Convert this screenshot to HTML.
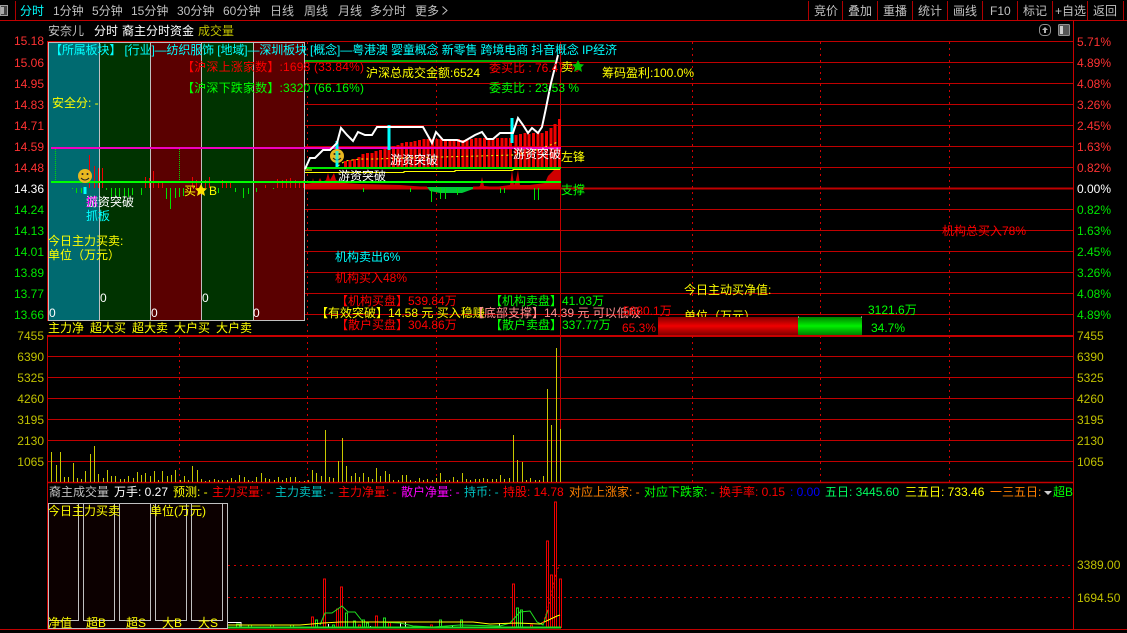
<!DOCTYPE html>
<html><head><meta charset="utf-8"><style>
html,body{margin:0;padding:0;background:#000;width:1127px;height:633px;overflow:hidden}
svg{display:block;position:absolute;left:0;top:0}
text{font-family:"Liberation Sans","WenQuanYi Zen Hei","Noto Sans CJK SC",sans-serif;font-size:12px;white-space:pre}
.g{fill:#c0c0c0}.w{fill:#fff}.c{fill:#00ffff}.t{fill:#00c0c0}.r{fill:#ff0000}.lr{fill:#ff3232}.n{fill:#00e600}.gg{fill:#00ff00}
.y{fill:#ffff00}.dy{fill:#c0c000}.m{fill:#ff00ff}.o{fill:#ff8000}.p{fill:#ff9090}.b{fill:#0000ff}.e{text-anchor:end}
</style></head><body>
<svg width="1127" height="633" viewBox="0 0 1127 633" xmlns="http://www.w3.org/2000/svg">
<defs>
<linearGradient id="gr" x1="0" y1="0" x2="0" y2="1"><stop offset="0" stop-color="#800000"/><stop offset=".5" stop-color="#f00000"/><stop offset="1" stop-color="#800000"/></linearGradient>
<linearGradient id="gg" x1="0" y1="0" x2="0" y2="1"><stop offset="0" stop-color="#008000"/><stop offset=".5" stop-color="#00f000"/><stop offset="1" stop-color="#008000"/></linearGradient>
</defs>
<rect width="1127" height="633" fill="#000"/>

<!-- top bar -->
<rect x="0.5" y="5.5" width="7" height="10" fill="#444" stroke="#a0a0a0"/><rect x="1" y="7" width="3" height="7" fill="#aaa"/>
<path d="M15.5 1V20M808.5 1V20M842.5 1V20M877.5 1V20M912.5 1V20M947.5 1V20M982.5 1V20M1017.5 1V20M1052.5 1V20M1087.5 1V20M1123.5 1V20" stroke="#b00000"/>
<path d="M0 20.5H1127" stroke="#c00000"/>
<text x="20" y="15" class="c">分时</text>
<text x="53" y="15" class="g">1分钟</text><text x="92" y="15" class="g">5分钟</text><text x="131" y="15" class="g">15分钟</text><text x="177" y="15" class="g">30分钟</text><text x="223" y="15" class="g">60分钟</text>
<text x="270" y="15" class="g">日线</text><text x="304" y="15" class="g">周线</text><text x="338" y="15" class="g">月线</text><text x="370" y="15" class="g">多分时</text><text x="415" y="15" class="g">更多</text>
<path d="M442.5 6.5L447 10.5L442.5 14.5" fill="none" stroke="#c0c0c0"/>
<text x="814" y="15" class="g">竞价</text><text x="848" y="15" class="g">叠加</text><text x="883" y="15" class="g">重播</text><text x="918" y="15" class="g">统计</text><text x="953" y="15" class="g">画线</text><text x="990" y="15" class="g">F10</text><text x="1023" y="15" class="g">标记</text><text x="1055" y="15" class="g">+自选</text><text x="1093" y="15" class="g">返回</text>

<!-- title -->
<text x="48" y="35" class="g">安奈儿</text><text x="94" y="35" class="w">分时</text><text x="122" y="35" class="w">裔主分时资金</text><text x="198" y="35" class="dy">成交量</text>

<!-- top-right icons -->
<rect x="1039.5" y="24.5" width="11" height="11" rx="4" fill="none" stroke="#909090"/><path d="M1045 27L1048 30H1046V33H1044V30H1042Z" fill="#b0b0b0"/>
<rect x="1058.5" y="24.5" width="11" height="11" rx="1" fill="#555" stroke="#909090"/><rect x="1060" y="26" width="3" height="8" fill="#ccc"/>

<!-- grid -->
<path d="M47 41.5H1073M47 62.5H1073M47 83.5H1073M47 104.5H1073M47 125.5H1073M47 146.5H1073M47 167.5H1073M47 209.5H1073M47 230.5H1073M47 251.5H1073M47 272.5H1073M47 293.5H1073M47 314.5H1073M47 356.5H1073M47 377.5H1073M47 398.5H1073M47 419.5H1073M47 440.5H1073M47 461.5H1073" stroke="#c00000" fill="none"/>
<path d="M47 188.5H1073" stroke="#c00000" stroke-width="2"/>
<path d="M47 336H1073" stroke="#c80000" stroke-width="2"/>
<path d="M47 482.5H1073" stroke="#c80000" stroke-width="1.5"/>
<path d="M0 629.5H1127" stroke="#c00000"/>
<path d="M47.5 42V630M1073.5 20V630" stroke="#c80000"/>
<path d="M560.5 42V482" stroke="#c00000"/>
<path d="M179.5 42V482M307.5 42V482M436.5 42V482M692.5 42V482M820.5 42V482M949.5 42V482" stroke="#d00000" stroke-dasharray="2 4"/>
<path d="M228 565.5H1073M228 597.5H1073" stroke="#d00000" stroke-dasharray="2 4"/>

<!-- y labels left -->
<g class="lr"><text x="44" y="45" class="e lr">15.18</text><text x="44" y="67" class="e lr">15.06</text><text x="44" y="88" class="e lr">14.95</text><text x="44" y="109" class="e lr">14.83</text><text x="44" y="130" class="e lr">14.71</text><text x="44" y="151" class="e lr">14.59</text><text x="44" y="172" class="e lr">14.48</text></g>
<text x="44" y="193" class="e w">14.36</text>
<text x="44" y="214" class="e n">14.24</text><text x="44" y="235" class="e n">14.13</text><text x="44" y="256" class="e n">14.01</text><text x="44" y="277" class="e n">13.89</text><text x="44" y="298" class="e n">13.77</text><text x="44" y="319" class="e n">13.66</text>
<text x="44" y="340" class="e dy">7455</text><text x="44" y="361" class="e dy">6390</text><text x="44" y="382" class="e dy">5325</text><text x="44" y="403" class="e dy">4260</text><text x="44" y="424" class="e dy">3195</text><text x="44" y="445" class="e dy">2130</text><text x="44" y="466" class="e dy">1065</text>

<!-- y labels right -->
<text x="1077" y="46" class="lr">5.71%</text><text x="1077" y="67" class="lr">4.89%</text><text x="1077" y="88" class="lr">4.08%</text><text x="1077" y="109" class="lr">3.26%</text><text x="1077" y="130" class="lr">2.45%</text><text x="1077" y="151" class="lr">1.63%</text><text x="1077" y="172" class="lr">0.82%</text>
<text x="1077" y="193" class="w">0.00%</text>
<text x="1077" y="214" class="n">0.82%</text><text x="1077" y="235" class="n">1.63%</text><text x="1077" y="256" class="n">2.45%</text><text x="1077" y="277" class="n">3.26%</text><text x="1077" y="298" class="n">4.08%</text><text x="1077" y="319" class="n">4.89%</text>
<text x="1077" y="340" class="dy">7455</text><text x="1077" y="361" class="dy">6390</text><text x="1077" y="382" class="dy">5325</text><text x="1077" y="403" class="dy">4260</text><text x="1077" y="424" class="dy">3195</text><text x="1077" y="445" class="dy">2130</text><text x="1077" y="466" class="dy">1065</text>
<text x="1077" y="569" class="dy">3389.00</text><text x="1077" y="602" class="dy">1694.50</text>

<!-- left panel -->
<rect x="48" y="42" width="51" height="278" fill="#006a70"/>
<rect x="99" y="42" width="51" height="278" fill="#003300"/>
<rect x="150" y="42" width="51" height="278" fill="#5a0000"/>
<rect x="201" y="42" width="52" height="278" fill="#003300"/>
<rect x="253" y="42" width="51" height="278" fill="#5a0000"/>
<path d="M48.5 42.5H304.5V320.5H48.5ZM99.5 42V320M150.5 42V320M201.5 42V320M253.5 42V320" fill="none" stroke="#c0c0c0"/>
<text x="49" y="317" class="w">0</text><text x="100" y="302" class="w">0</text><text x="151" y="317" class="w">0</text><text x="202" y="302" class="w">0</text><text x="253" y="317" class="w">0</text>

<!-- top green line -->
<path d="M305 61H555" stroke="#00e000" stroke-width="1.5"/>

<!-- sticks left -->
<path d="M89.5 155V188M94.5 166V188M98.5 168V188M102.5 168V188M145.5 177V188M149.5 178V188M153.5 171V188M158.5 182V188M162.5 182V188M192.5 177V188M196.5 180V188M205.5 180V188M209.5 177V188M222.5 180V188M226.5 183V188M230.5 183V188M265.5 185V188M277.5 179V188M282.5 180V188M286.5 179V188M290.5 178V188M295.5 180V188M299.5 182V188M303.5 180V188" stroke="#f00000"/>
<path d="M72.5 188V189M76.5 188V193M81.5 188V193M106.5 188V190M111.5 188V197M115.5 188V197M119.5 188V197M124.5 188V197M128.5 188V197M132.5 188V195M141.5 188V195M166.5 188V199M170.5 188V209M175.5 188V198M179.5 188V197M183.5 188V196M218.5 188V193M235.5 188V192M243.5 188V198M248.5 188V194M256.5 188V192M273.5 188V189" stroke="#00e000"/>
<path d="M55.5 149V180M179.5 149V180" stroke="#00e000" stroke-dasharray="1 1"/>

<!-- main red bars -->
<path d="M345.5 168V161M350 168V160M354.5 168V159M359 168V157M363 168V154M367.5 168V153M372 168V153M376 168V151M380.5 168V150M385 168V149M389 168V147M393.5 168V146M398 168V145M402 168V143M406.5 168V142M411 168V142M415 168V141M419.5 168V140M424 168V139M428 168V139M432.5 168V139M437 168V139M441 168V139M445.5 168V140M450 168V140M454 168V140M458.5 168V139M463 168V140M467 168V139M471.5 168V139M476 168V138M480 168V138M484.5 168V138M489 168V139M493 168V139M497.5 168V138M502 168V138M506 168V138M510.5 168V138M516 168V135M520.5 168V134M525 168V133M529 168V134M533.5 168V133M538 168V133M542 168V133M546.5 168V131M551 168V128M555 168V124M559.5 168V119" stroke="#f00000" stroke-width="3"/>
<path d="M338 166L345 161L360 159L376 159L400 158L440 157L480 156L513 155L530 152L545 147L558 142" fill="none" stroke="#ffff00" stroke-dasharray="2 3"/>

<!-- bottom red band -->
<path d="M305 189V184L312 183L313 178L314 183L318 182L320 178L322 182L326 180L328 173L330 180L334 173L336 180L344 183L360 184L400 185L427 187V189ZM473 189L480 186L482 177L484 186L495 187L510 185L512 170L514 185L516 180L518 170L520 185L530 185L545 183L548 176L552 172L556 168L561 168V189Z" fill="#d00000"/>
<path d="M305 188H427M473 188H561" stroke="#c80000" stroke-width="3"/>
<path d="M427 187H473V189L462 193H450L440 193L430 191Z" fill="#00c838"/>
<path d="M363.5 188V192M410.5 188V192M431.5 188V202M440.5 188V199M445.5 188V199M457.5 188V195M500.5 188V193M504.5 188V193M534.5 188V200M538.5 188V200" stroke="#00e000"/>

<!-- yellow lines -->
<path d="M305 172.5H404V171.5H455V170.5H513V169.5H560" fill="none" stroke="#ffff00"/>
<path d="M305 170H312" stroke="#ffff00"/>

<!-- green & magenta horizontal -->
<path d="M51 148H561" stroke="#f000c0" stroke-width="2"/>
<path d="M305 168H561" stroke="#00e800" stroke-width="2"/>
<path d="M51 182H561" stroke="#00ff00" stroke-width="2"/>

<!-- cyan bars -->
<path d="M337 141V167M389 125V150M512 118V143M85 187V194" stroke="#00ffff" stroke-width="3"/>

<!-- price line -->
<polyline points="305,169 310,158 315,158 323,150 330,150 337,143 341,128 347,135 353,141 358,132 365,135 372,135 377,127 388,127 423,127 432,143 436,132 443,140 457,140 463,142 475,135 482,132 487,139 493,139 500,133 513,133 518,118 523,125 528,133 532,128 538,133 542,127 546,108 551,83 558,55" fill="none" stroke="#fff" stroke-width="2"/>

<!-- emoji -->
<circle cx="85" cy="176" r="7" fill="#e8b820"/><circle cx="82.5" cy="174" r="1" fill="#222"/><circle cx="87.5" cy="174" r="1" fill="#222"/><path d="M81 178Q85 182 89 178" fill="none" stroke="#222"/>
<circle cx="337" cy="156" r="7" fill="#e8b820"/><circle cx="334.5" cy="154" r="1" fill="#222"/><circle cx="339.5" cy="154" r="1" fill="#222"/><path d="M333 158Q337 162 341 158" fill="none" stroke="#222"/>
<path d="M337 151V163" stroke="#00ffff" stroke-width="3" opacity=".7"/>

<!-- overlays main chart -->
<text x="50" y="54" class="c" textLength="567" lengthAdjust="spacing">【所属板块】 [行业]—纺织服饰 [地域]—深圳板块 [概念]—粤港澳 婴童概念 新零售 跨境电商 抖音概念 IP经济</text>
<text x="182" y="71" class="r" textLength="182">【沪深上涨家数】:1698 (33.84%)</text>
<text x="182" y="92" class="gg" textLength="182">【沪深下跌家数】:3320 (66.16%)</text>
<text x="366" y="77" class="y">沪深总成交金额:6524</text>
<text x="489" y="72" class="r">委买比 : 76.47 %</text>
<text x="489" y="92" class="gg">委卖比 : 23.53 %</text>
<text x="561" y="71" class="y">卖</text>
<polygon points="578,60 580,64 584,64.5 581,67.5 582,72 578,69.5 574,72 575,67.5 572,64.5 576,64" fill="#00c000"/>
<text x="602" y="77" class="y">筹码盈利:100.0%</text>
<text x="52" y="107" class="y">安全分: -</text>

<text x="86" y="206" class="w">游资突破</text><text x="86" y="206" class="m">抓</text>
<text x="86" y="220" class="c">抓板</text>
<text x="48" y="245" class="y">今日主力买卖:</text>
<text x="48" y="259" class="y">单位（万元）</text>
<text x="184" y="195" class="y">买</text>
<polygon points="201,184 203,188 207,188.5 204,191.5 205,196 201,193.5 197,196 198,191.5 195,188.5 199,188" fill="#ffe000"/>
<text x="209" y="195" class="y">B</text>
<text x="390" y="164" class="w">游资突破</text>
<text x="338" y="180" class="w">游资突破</text>
<text x="513" y="158" class="w">游资突破</text>
<text x="561" y="161" class="y">左锋</text>
<text x="561" y="194" class="gg">支撑</text>

<text x="335" y="261" class="c">机构卖出6%</text>
<text x="335" y="282" class="r">机构买入48%</text>
<text x="336" y="305" class="r">【机构买盘】539.84万</text>
<text x="490" y="305" class="gg">【机构卖盘】41.03万</text>
<text x="316" y="317" class="y">【有效突破】14.58 元 买入稳赚</text>
<text x="472" y="317" class="p">【底部支撑】14.39 元 可以低吸</text>
<text x="336" y="329" class="r">【散户买盘】304.86万</text>
<text x="490" y="329" class="gg">【散户卖盘】337.77万</text>
<text x="942" y="235" class="r">机构总买入78%</text>
<text x="684" y="294" class="y">今日主动买净值:</text>
<text x="684" y="320" class="y">单位（万元）</text>
<text x="623" y="315" class="r">5880.1万</text>
<text x="868" y="314" class="gg">3121.6万</text>
<text x="622" y="332" class="r">65.3%</text>
<text x="871" y="332" class="gg">34.7%</text>
<rect x="658" y="317" width="140" height="18" fill="url(#gr)"/>
<rect x="798" y="317" width="64" height="18" fill="url(#gg)"/>
<path d="M798 317h1M861 317h1" stroke="#ddd"/>

<rect x="47" y="321" width="258" height="14" fill="#000"/>
<text x="48" y="332" class="y">主力净</text><text x="90" y="332" class="y">超大买</text><text x="132" y="332" class="y">超大卖</text><text x="174" y="332" class="y">大户买</text><text x="216" y="332" class="y">大户卖</text>

<!-- volume bars -->
<path stroke="#c8c800" fill="none" d="M51.5 482V452M56.5 482V465M60.5 482V452M64.5 482V477M68.5 482V477M73.5 482V463M77.5 482V478M81.5 482V479M85.5 482V471M90.5 482V454M94.5 482V446M98.5 482V474M103.5 482V478M107.5 482V470M111.5 482V476M115.5 482V476M120.5 482V479M124.5 482V479M128.5 482V476M133.5 482V478M137.5 482V472M141.5 482V475M145.5 482V473M150.5 482V476M154.5 482V471M158.5 482V480M162.5 482V471M167.5 482V476M171.5 482V475M175.5 482V470M180.5 482V480M184.5 482V476M188.5 482V480M192.5 482V466M197.5 482V470M201.5 482V479M205.5 482V481M209.5 482V480M214.5 482V479M218.5 482V480M222.5 482V480M227.5 482V480M231.5 482V478M235.5 482V480M239.5 482V475M244.5 482V477M248.5 482V480M252.5 482V481M256.5 482V477M261.5 482V473M265.5 482V478M269.5 482V479M274.5 482V480M278.5 482V477M282.5 482V480M286.5 482V478M290.5 482V477M295.5 482V477M299.5 482V481M304.5 482V481M308.5 482V480M312.5 482V470M316.5 482V473M321.5 482V476M325.5 482V430M329.5 482V477M333.5 482V478M338.5 482V461M342.5 482V438M346.5 482V466M351.5 482V476M355.5 482V473M359.5 482V477M363.5 482V473M368.5 482V477M372.5 482V479M376.5 482V468M380.5 482V476M385.5 482V471M389.5 482V474M393.5 482V480M398.5 482V480M402.5 482V475M406.5 482V475M410.5 482V480M415.5 482V481M419.5 482V478M423.5 482V480M427.5 482V479M432.5 482V480M436.5 482V478M440.5 482V473M445.5 482V480M449.5 482V480M453.5 482V477M457.5 482V480M462.5 482V473M466.5 482V479M470.5 482V480M475.5 482V479M479.5 482V479M483.5 482V478M487.5 482V479M492.5 482V479M496.5 482V479M500.5 482V475M504.5 482V479M509.5 482V478M513.5 482V435M517.5 482V460M522.5 482V462M526.5 482V480M530.5 482V478M535.5 482V480M539.5 482V480M543.5 482V476M547.5 482V389M551.5 482V425M556.5 482V348M560.5 482V429"/>

<!-- bottom indicators -->
<text x="49" y="496" class="g">裔主成交量</text>
<text x="114" y="496" class="w">万手: 0.27</text>
<text x="173" y="496" class="y">预测: -</text>
<text x="212" y="496" class="r">主力买量: -</text>
<text x="275" y="496" class="t">主力卖量: -</text>
<text x="338" y="496" class="r">主力净量: -</text>
<text x="401" y="496" class="m">散户净量: -</text>
<text x="464" y="496" class="t">持币: -</text>
<text x="503" y="496" class="r">持股: 14.78</text>
<text x="569" y="496" class="o">对应上涨家: -</text>
<text x="644" y="496" class="gg">对应下跌家: -</text>
<text x="719" y="496" class="r">换手率: 0.15</text>
<text x="790" y="496" class="b">: 0.00</text>
<text x="825" y="496" fill="#00ff60">五日: 3445.60</text>
<text x="905" y="496" class="y">三五日: 733.46</text>
<text x="990" y="496" class="o">一三五日:</text>
<text x="1053" y="496" class="gg">超B</text>
<path d="M1044 491H1052L1048 495Z" fill="#ccc"/>

<!-- bottom left box -->
<rect x="48.5" y="503.5" width="179" height="125" fill="#0c0000" stroke="#c0c0c0"/>
<path d="M48.5 503.5H78.5V620.5H48.5ZM83.5 503.5H114.5V620.5H83.5ZM119.5 503.5H150.5V620.5H119.5ZM155.5 503.5H186.5V620.5H155.5ZM191.5 503.5H222.5V620.5H191.5Z" fill="#0c0000" stroke="#c0c0c0"/>
<text x="48" y="515" class="y">今日主力买卖</text><text x="150" y="515" class="y">单位(万元)</text>
<text x="48" y="627" class="y">净值</text><text x="86" y="627" class="y">超B</text><text x="126" y="627" class="y">超S</text><text x="162" y="627" class="y">大B</text><text x="198" y="627" class="y">大S</text>

<!-- bottom chart -->
<path fill="none" stroke="#f00000" d="M311.5 628V617H313.5V628M323.5 628V579H325.5V628M336.5 628V609H338.5V628M340.5 628V587H342.5V628M358.5 628V625H360.5V628M375.5 628V616H377.5V628M388.5 628V622H390.5V628M430.5 628V625H432.5V628M512.5 628V584H514.5V628M530.5 628V625H532.5V628M546.5 628V541H548.5V628M550.5 628V575H552.5V628M554.5 628V502H556.5V628M559.5 628V579H561.5V628"/>
<path fill="none" stroke="#20e020" d="M315.5 628V620H317.5V628M332.5 628V625H334.5V628M345.5 628V613H347.5V628M353.5 628V621H355.5V628M362.5 628V620H364.5V628M366.5 628V623H368.5V628M383.5 628V618H385.5V628M439.5 628V620H441.5V628M460.5 628V620H462.5V628M516.5 628V608H518.5V628M520.5 628V610H522.5V628M236.5 628V624H239.5V628M248.5 628V625H251.5V628M270.5 628V625H273.5V628M290.5 628V625H293.5V628"/>
<path fill="none" stroke="#fff" d="M328.5 628V624M370.5 628V626M400.5 628V623M405.5 628V622M452.5 628V625M499.5 628V623M228 622.5H241V628"/>
<path d="M228 627.5H561" stroke="#20e020" stroke-width="2"/>
<polyline points="320,625 325,613 332,613 342,606 348,612 355,612 363,622 377,622 400,623 413,626 433,627 460,625 500,626 510,623 520,612 530,611 537,622 543,625 548,610" fill="none" stroke="#20e020"/>
<polyline points="228,625 300,625 323,623 340,622 367,622 473,622 490,624 517,623 540,624 557,616 560,615" fill="none" stroke="#ffff00"/>
<polyline points="543,623 548,608 553,587 557,570 560,565" fill="none" stroke="#f00000" stroke-dasharray="2 2"/>
</svg>
</body></html>
